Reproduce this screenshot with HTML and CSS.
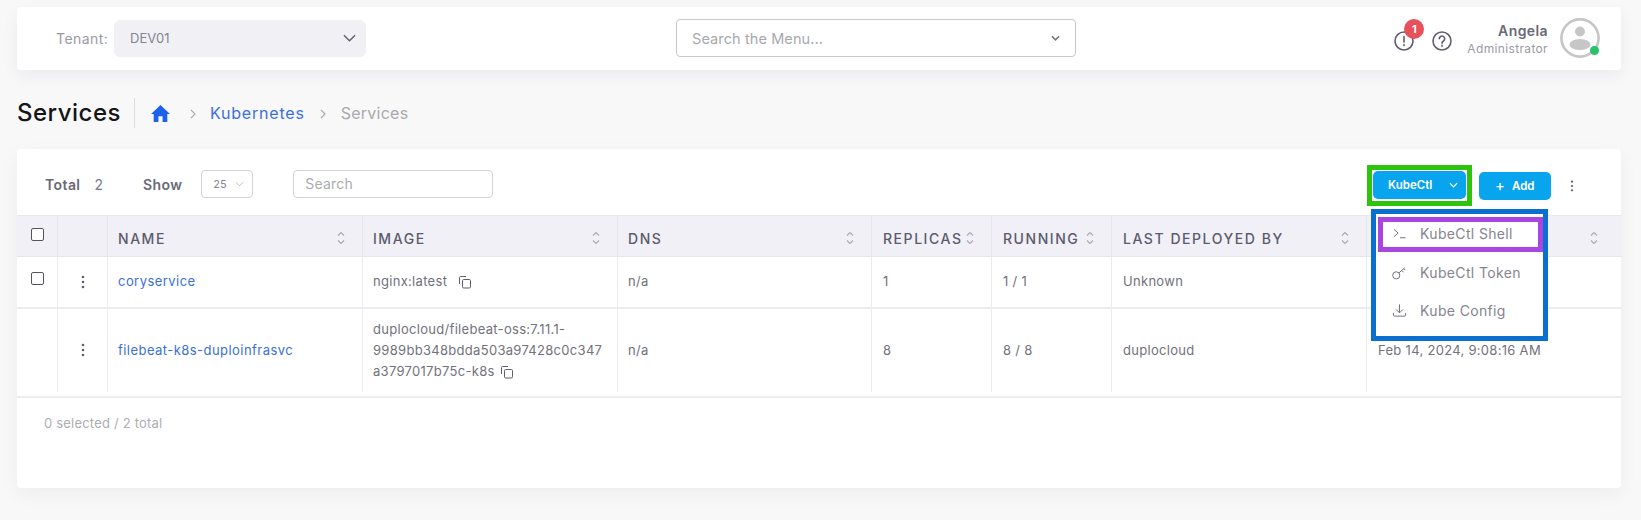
FILE: index.html
```html
<!DOCTYPE html>
<html lang="en">
<head>
<meta charset="utf-8">
<title>Services</title>
<link rel="stylesheet" href="styles.css">
</head>
<body>
<header class="topbar">
  <span class="tenant-label">Tenant:</span>
  <div class="tenant-select"><span>DEV01</span>
    <svg class="tenant-chev" viewBox="0 0 14 8"><path d="M1 1l6 6 6-6"/></svg>
  </div>
  <div class="menu-search"><span>Search the Menu...</span>
    <svg class="menu-chev" viewBox="0 0 10 6"><path d="M1 1l4 4 4-4"/></svg>
  </div>
  <div class="top-right">
    <div class="alert">
      <svg class="round-icon" viewBox="0 0 20 20"><circle cx="10" cy="10" r="9"/><path d="M10 5.500v5.500M10 13.600v1"/></svg>
      <span class="badge">1</span>
    </div>
    <svg class="round-icon help" viewBox="0 0 20 20"><circle cx="10" cy="10" r="9"/><path d="M7.300 7.800a2.700 2.700 0 1 1 4.200 2.200c-1 .7-1.500 1.100-1.500 2.200M10 14.200v1"/></svg>
    <div class="user"><strong>Angela</strong><span>Administrator</span></div>
    <div class="avatar">
      <svg viewBox="0 0 40 40"><circle class="av-ring" cx="20" cy="20" r="18.600"/><circle class="av-fill" cx="20" cy="13.500" r="5"/><ellipse class="av-fill" cx="20" cy="26.500" rx="10.500" ry="5.500"/></svg>
      <span class="online"></span>
    </div>
  </div>
</header>

<div class="crumbs">
  <h1>Services</h1>
  <svg class="home" viewBox="0 0 20 18"><path d="M10 0L0 9.400h2.800V18h5v-6h4.400v6h5V9.400H20z"/></svg>
  <svg class="crumb-chev first" viewBox="0 0 6 10"><path d="M1 1l4 4-4 4"/></svg>
  <a class="crumb-link">Kubernetes</a>
  <svg class="crumb-chev" viewBox="0 0 6 10"><path d="M1 1l4 4-4 4"/></svg>
  <span class="crumb-current">Services</span>
</div>

<main class="card">
  <div class="toolbar">
    <span class="tool-label">Total</span><span class="tool-count">2</span>
    <span class="tool-label show">Show</span>
    <div class="page-size"><span>25</span><svg viewBox="0 0 10 6"><path d="M1 1l4 4 4-4"/></svg></div>
    <div class="table-search">Search</div>
    <div class="tool-right">
      <div class="kube-wrap">
        <button class="btn kube"><span>KubeCtl</span><svg viewBox="0 0 10 6"><path d="M1 1l4 4 4-4"/></svg></button>
        <div class="kube-menu">
          <div class="menu-item active">
            <svg viewBox="0 0 16 16"><path d="M2 3.500l4.500 4-4.500 4M8.500 12.500h6"/></svg>KubeCtl Shell
          </div>
          <div class="menu-item">
            <svg viewBox="0 0 16 16"><circle cx="4.500" cy="11" r="3.800"/><path d="M7.300 8.500l6.200-5.500M10.300 5.800l2 2M12.500 3.800l1.800 1.800"/></svg>KubeCtl Token
          </div>
          <div class="menu-item">
            <svg viewBox="0 0 16 16"><path d="M8 1.500v9M4.500 7l3.500 3.500L11.500 7M1.500 10.500v2.500a1 1 0 0 0 1 1h11a1 1 0 0 0 1-1v-2.500"/></svg>Kube Config
          </div>
        </div>
      </div>
      <button class="btn add"><span class="plus">+</span>Add</button>
      <svg class="dots tool-dots" viewBox="0 0 4 14"><circle cx="2" cy="2" r="1.300"/><circle cx="2" cy="7" r="1.300"/><circle cx="2" cy="12" r="1.300"/></svg>
    </div>
  </div>

  <div class="table-wrap">
    <table>
      <colgroup>
        <col class="c-check"><col class="c-act"><col class="c-wide"><col class="c-wide"><col class="c-dns"><col class="c-num"><col class="c-num"><col class="c-wide"><col class="c-wide">
      </colgroup>
      <thead>
        <tr>
          <th class="check-cell"><span class="checkbox"></span></th>
          <th></th>
          <th><div class="th-in">Name<svg class="sort" viewBox="0 0 10 14"><path d="M2 4.500l3-3 3 3M2 9.500l3 3 3-3"/></svg></div></th>
          <th><div class="th-in">Image<svg class="sort" viewBox="0 0 10 14"><path d="M2 4.500l3-3 3 3M2 9.500l3 3 3-3"/></svg></div></th>
          <th><div class="th-in">DNS<svg class="sort" viewBox="0 0 10 14"><path d="M2 4.500l3-3 3 3M2 9.500l3 3 3-3"/></svg></div></th>
          <th><div class="th-in">Replicas<svg class="sort" viewBox="0 0 10 14"><path d="M2 4.500l3-3 3 3M2 9.500l3 3 3-3"/></svg></div></th>
          <th><div class="th-in">Running<svg class="sort" viewBox="0 0 10 14"><path d="M2 4.500l3-3 3 3M2 9.500l3 3 3-3"/></svg></div></th>
          <th><div class="th-in">Last Deployed By<svg class="sort" viewBox="0 0 10 14"><path d="M2 4.500l3-3 3 3M2 9.500l3 3 3-3"/></svg></div></th>
          <th><div class="th-in th-last"><span></span><svg class="sort" viewBox="0 0 10 14"><path d="M2 4.500l3-3 3 3M2 9.500l3 3 3-3"/></svg></div></th>
        </tr>
      </thead>
      <tbody>
        <tr class="row-one">
          <td class="check-cell"><span class="checkbox"></span></td>
          <td class="act-cell"><svg class="dots" viewBox="0 0 4 14"><circle cx="2" cy="2" r="1.300"/><circle cx="2" cy="7" r="1.300"/><circle cx="2" cy="12" r="1.300"/></svg></td>
          <td><a class="name-link">coryservice</a></td>
          <td>nginx:latest<svg class="copy copy-short" viewBox="0 0 14 14"><path d="M1.500 9V2.500a1 1 0 0 1 1-1H8"/><rect x="4.500" y="4.500" width="8" height="8.500" rx="1.200"/></svg></td>
          <td>n/a</td>
          <td>1</td>
          <td>1 / 1</td>
          <td>Unknown</td>
          <td></td>
        </tr>
        <tr class="row-two">
          <td class="check-cell"></td>
          <td class="act-cell"><svg class="dots" viewBox="0 0 4 14"><circle cx="2" cy="2" r="1.300"/><circle cx="2" cy="7" r="1.300"/><circle cx="2" cy="12" r="1.300"/></svg></td>
          <td><a class="name-link">filebeat-k8s-duploinfrasvc</a></td>
          <td>duplocloud/filebeat-oss:7.11.1-<br>9989bb348bdda503a97428c0c347<br>a3797017b75c-k8s<svg class="copy" viewBox="0 0 14 14"><path d="M1.500 9V2.500a1 1 0 0 1 1-1H8"/><rect x="4.500" y="4.500" width="8" height="8.500" rx="1.200"/></svg></td>
          <td>n/a</td>
          <td>8</td>
          <td>8 / 8</td>
          <td>duplocloud</td>
          <td>Feb 14, 2024, 9:08:16 AM</td>
        </tr>
      </tbody>
    </table>
  </div>
  <p class="selected">0 selected / 2 total</p>
</main>
</body>
</html>
```

FILE: styles.css
```css
* { box-sizing: border-box; }
html, body { margin: 0; height: 520px; overflow: hidden; }
body {
  background: #f8f8f9;
  font-family: Inter, "Open Sans", sans-serif;
  color: #6b6a78;
  padding: 7px 20px 0 17px;
}
svg { display: block; fill: none; stroke: currentColor; }

/* top bar */
.topbar {
  height: 63px;
  background: #fff;
  border-radius: 4px;
  box-shadow: 0 6px 16px rgba(40, 40, 60, .06);
  display: flex;
  align-items: center;
  padding: 0 0 1px 39px;
}
.tenant-label { font-size: 14px; color: #9a9aa2; width: 58px; letter-spacing: .45px; }
.tenant-select {
  width: 252px; height: 37px;
  background: #f1f0f5; border-radius: 6px;
  display: flex; align-items: center; justify-content: space-between;
  padding: 0 10px 0 16px;
  font-size: 13px; color: #85848f;
}
.tenant-chev { width: 13px; height: 8px; stroke: #5f5e6c; stroke-width: 1.500; }
.menu-search {
  width: 400px; height: 38px; margin-left: 310px;
  border: 1px solid #c8c8cc; border-radius: 4px;
  display: flex; align-items: center; justify-content: space-between;
  padding: 0 15px;
  font-size: 14.500px; color: #a8a8ae; letter-spacing: .1px;
}
.menu-chev { width: 9px; height: 6px; stroke: #77767f; stroke-width: 1.800; }
.top-right { margin-left: auto; display: flex; align-items: center; padding-right: 21px; }
.alert { position: relative; }
.round-icon { width: 20px; height: 20px; stroke: #5f5e6c; stroke-width: 1.600; stroke-linecap: round; margin-top: 6px; }
.help { margin-left: 18px; }
.badge {
  position: absolute; left: 10px; top: -6px;
  width: 20px; height: 20px; border-radius: 50%;
  background: #e8505b; color: #fff;
  font-size: 11px; font-weight: 700;
  display: flex; align-items: center; justify-content: center;
}
.user { margin-left: 15px; margin-top: 2px; display: flex; flex-direction: column; align-items: flex-end; }
.user strong { font-size: 14px; font-weight: 600; color: #6a6976; letter-spacing: .4px; line-height: 18px; }
.user span { font-size: 12px; color: #9a9aa2; letter-spacing: .35px; line-height: 17px; }
.avatar { position: relative; width: 40px; height: 40px; margin-left: 12px; }
.avatar svg { width: 40px; height: 40px; stroke: none; }
.av-ring { fill: none; stroke: #c6c6c6; stroke-width: 2.600; }
.av-fill { fill: #c6c6c6; }
.online {
  position: absolute; left: 30px; top: 28px;
  width: 9px; height: 9px; border-radius: 50%;
  background: #27c36a;
}

/* breadcrumb */
.crumbs { display: flex; align-items: center; height: 30px; margin-top: 28px; }
h1 {
  margin: 0; padding-right: 13px;
  height: 30px; line-height: 30px;
  border-right: 1px solid #dcdce0;
  font-size: 24px; font-weight: 500; color: #151518; letter-spacing: .5px;
}
.home { width: 19px; height: 17px; margin-left: 16px; fill: #1c62ea; stroke: none; }
.crumb-chev { width: 6px; height: 10px; stroke: #a9a9af; stroke-width: 1.100; margin: 1px 15px 0 15px; }
.crumb-chev.first { margin-left: 20px; margin-right: 14px; }
.crumb-link { font-size: 16px; color: #3a70d8; letter-spacing: .8px; }
.crumb-current { font-size: 16px; color: #a9a9ae; letter-spacing: .25px; }

/* card */
.card {
  height: 339px; margin-top: 21px;
  background: #fff; border-radius: 4px;
  box-shadow: 0 6px 18px rgba(40, 40, 60, .05);
}
.toolbar { height: 66px; padding: 4px 0 0 28px; display: flex; align-items: center; }
.tool-label { font-size: 14px; font-weight: 600; color: #6a6976; letter-spacing: .4px; }
.tool-count { font-size: 14px; margin-left: 14px; color: #7b7a86; }
.show { margin-left: 40px; }
.page-size {
  width: 52px; height: 28px; margin-left: 19px;
  border: 1px solid #d4d4d8; border-radius: 4px;
  display: flex; align-items: center; gap: 8px;
  padding-left: 11px;
  font-size: 11px; color: #85848f;
}
.page-size svg { width: 9px; height: 6px; stroke: #b4b4ba; stroke-width: 1; }
.table-search {
  width: 200px; height: 28px; margin-left: 40px;
  border: 1px solid #d4d4d8; border-radius: 4px;
  padding: 0 11px; line-height: 26px;
  font-size: 14px; color: #ababb2; letter-spacing: .2px;
}
.tool-right { margin-left: auto; display: flex; align-items: center; margin-top: 3px; }
.kube-wrap {
  position: relative;
  width: 105px; height: 41px;
  border: 5px solid #2fc40c;
  padding: 1px;
}
.btn {
  border: 0; color: #fff; background: #08a4ee;
  border-radius: 5px;
  font-family: inherit; font-size: 11.500px; font-weight: 600;
  height: 28px;
  display: flex; align-items: center;
}
.kube { width: 93px; padding: 0 0 0 15px; justify-content: space-between; }
.kube svg { width: 9px; height: 6px; stroke: #fff; stroke-width: 1.300; margin-right: 8px; }
.add { width: 72px; margin-left: 7px; padding: 0 0 0 16px; }
.plus { font-size: 15px; font-weight: 400; margin-right: 7px; }
.dots { width: 4px; height: 14px; fill: #5f5e6c; stroke: none; }
.tool-dots { height: 12px; margin: 0 47px 0 19px; }

/* dropdown */
.kube-menu {
  position: absolute; left: -1px; top: 39px; z-index: 3;
  width: 177px; height: 132px;
  background: #fff;
  border: 5px solid #0b6fd0;
  padding-top: 3px;
}
.menu-item {
  height: 38px;
  display: flex; align-items: center;
  padding-left: 16px;
  font-size: 14px; color: #85848f; letter-spacing: .35px;
}
.menu-item svg { width: 15px; height: 15px; margin-right: 13px; stroke: #6a6976; stroke-width: 1; }
.menu-item.active {
  height: 35px; margin: 0 0 1px 2px; padding: 0 0 3px 9px;
  width: 165px;
  border: 5px solid #a945e0;
}

/* table */
.table-wrap { padding-bottom: 4px; border-bottom: 2px solid #ececf0; }
table { width: 100%; border-collapse: collapse; table-layout: fixed; }
.c-check { width: 40.500px; }
.c-act { width: 50px; }
.c-wide { width: 255px; }
.c-dns { width: 254px; }
.c-num { width: 120px; }
th {
  height: 41px; padding: 0 0 0 11px;
  background: #f1f0f6;
  border-top: 1px solid #e8e8ee;
  border-bottom: 1px solid #e6e6ec;
  border-left: 1px solid #e6e6ec;
  font-size: 14px; font-weight: 500; text-transform: uppercase;
  letter-spacing: 1.550px; color: #5c5a6e; text-align: left;
}
th:first-child, td:first-child { border-left: 0; }
.th-in { display: flex; align-items: center; justify-content: space-between; padding-right: 16px; margin-top: 4px; }
.th-last { padding-right: 23px; }
.sort { width: 10px; height: 14px; flex: none; stroke: #a9a9b2; stroke-width: 1.100; }
td {
  padding: 0 0 0 11px;
  border-left: 1px solid #ececf0;
  font-size: 13px; line-height: 21px; color: #72717c; letter-spacing: .3px;
}
th:nth-child(n+3):nth-child(-n+5), td:nth-child(n+3):nth-child(-n+5) { padding-left: 10px; }
.row-one td { height: 51px; border-bottom: 2px solid #ececf0; }
.row-two td { height: 84px; }
.check-cell { padding: 0 0 0 14px; vertical-align: top; }
th.check-cell { padding-top: 12px; }
.row-one .check-cell { padding-top: 15px; }
.checkbox { display: block; width: 13px; height: 13px; border: 1px solid #55545e; border-radius: 2px; background: #fff; }
.act-cell { padding-left: 23px; }
.name-link { color: #3a70d8; letter-spacing: .45px; }
.copy { display: inline-block; vertical-align: -3px; width: 14px; height: 14px; margin-left: 5px; stroke: #5f5e6c; stroke-width: 1; }
.copy-short { margin-left: 11px; }
.selected { margin: 15px 0 0 27px; font-size: 13px; line-height: 20px; color: #adadb3; letter-spacing: .2px; }
```
